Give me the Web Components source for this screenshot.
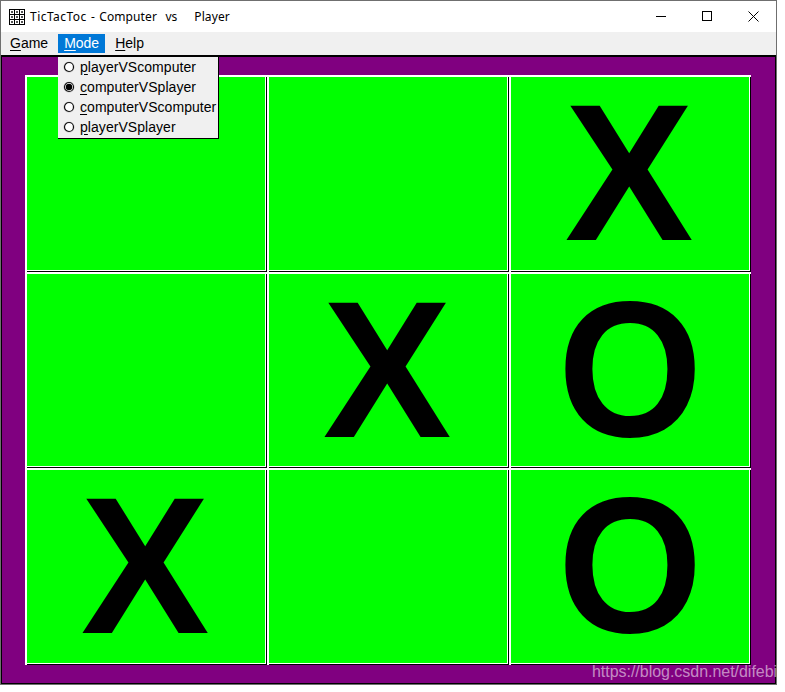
<!DOCTYPE html>
<html><head><meta charset="utf-8"><style>
html,body{margin:0;padding:0;background:#fff;width:785px;height:692px;overflow:hidden}
</style></head><body>
<ttt-window>
  <ttt-title slot="title"><span style="letter-spacing:.47px">TicTacToc</span> - Computer&nbsp; vs&nbsp;&nbsp;&nbsp;&nbsp;Player</ttt-title>
  <ttt-menubar slot="menu"></ttt-menubar>
  <ttt-board slot="board" marks=",,X,,X,O,X,,O"></ttt-board>
  <ttt-menu slot="popup"></ttt-menu>
</ttt-window>
<script>
function def(name,css,html,init){
  customElements.define(name,class extends HTMLElement{
    constructor(){super();this.attachShadow({mode:'open'}).innerHTML='<style>'+css+'</style>'+html;}
    connectedCallback(){if(init)init.call(this,this.shadowRoot);}
  });
}
const cellsIcon=[1,6,11].flatMap(y=>[1,6,11].map(x=>`<rect x="${x}" y="${y}" width="4" height="4" fill="#fff"/><rect x="${x+1}" y="${y+1}" width="2" height="2" fill="#555"/>`)).join('');
def('ttt-window',`
 :host{display:block;position:relative;width:777px;height:685px;box-sizing:border-box;border:1px solid #6f6f6f;background:#fff;font-family:"Liberation Sans",Arial,sans-serif}
 .wrap{display:flex;flex-direction:column;height:100%}
 .foot{flex:1;display:flex;min-height:0}
 .pop{position:absolute;left:57px;top:54px}
 .wm{position:absolute;left:591px;bottom:3px;font:16px "Liberation Sans",Arial,sans-serif;letter-spacing:-.03px;color:rgba(255,255,255,.55);white-space:nowrap}
`,`<div class="wrap"><slot name="title"></slot><slot name="menu"></slot><div class="foot"><slot name="board"></slot></div></div>
<div class="pop"><slot name="popup"></slot></div><div class="wm">https://blog.csdn.net/difebi</div>`);
def('ttt-title',`
 :host{display:flex;align-items:center;height:31px;flex:none;background:#fff;font:12px "Noto Sans","Segoe UI",sans-serif;color:#000}
 .ic{margin:0 5px 0 8px;flex:none;display:block}
 .t{flex:1;white-space:pre;letter-spacing:.1px;word-spacing:1px}
 .b{width:46px;height:31px;display:flex;align-items:center;justify-content:center;flex:none}
 .btns{display:flex}
`,`<svg class="ic" width="16" height="16" viewBox="0 0 16 16" shape-rendering="crispEdges"><rect width="16" height="16" fill="#000"/>${cellsIcon}</svg>
<span class="t"><slot></slot></span>
<div class="btns"><div class="b"><svg width="11" height="11" shape-rendering="crispEdges"><rect x="0" y="5" width="10" height="1" fill="#000"/></svg></div>
<div class="b"><svg width="11" height="11" shape-rendering="crispEdges"><rect x=".5" y=".5" width="9" height="9" fill="none" stroke="#000"/></svg></div>
<div class="b"><svg width="11" height="11"><path d="M.5.5l10 10M10.5.5l-10 10" stroke="#000" stroke-width="1" fill="none"/></svg></div></div>`);
def('ttt-menubar',`
 :host{display:flex;height:23px;flex:none;background:#f0f0f0;font:14px "Liberation Sans",Arial,sans-serif;color:#000;padding:2px 0 0 3px;box-sizing:border-box;align-items:flex-start}
 span{padding:0 6px;margin-right:4px;height:19px;line-height:18px}
 span.a{background:#0078d7;color:#fff}
 u{text-underline-offset:2px}
`,`<span><u>G</u>ame</span><span class="a"><u>M</u>ode</span><span><u>H</u>elp</span>`);
def('ttt-menu',`
 :host{display:block;width:161px;box-sizing:border-box;background:#f0f0f0;border-top:2px solid #000;border-right:1px solid #000;border-bottom:1px solid #000;padding:0 0 1px;font:14px "Liberation Sans",Arial,sans-serif;letter-spacing:.05px;color:#000}
 div{display:flex;align-items:center;height:20px;white-space:nowrap}
 svg{margin:0 5px 0 5px;flex:none}
 u{text-underline-offset:2px}
`,[['p','layerVScomputer',0],['c','omputerVSplayer',1],['c','omputerVScomputer',0],['p','layerVSplayer',0]].map(([a,b,s])=>
`<div><svg width="12" height="12"><circle cx="6" cy="6" r="5.6" fill="#aaa" opacity=".5"/><circle cx="6" cy="6" r="4.5" fill="#fff" stroke="#111" stroke-width="1.2"/>${s?'<circle cx="6" cy="6" r="3.2" fill="#000"/>':''}</svg><span><u>${a}</u>${b}</span></div>`).join(''));
def('ttt-board',`
 :host{display:block;flex:1;background:#800080;border:solid #000;border-width:2px 1px 1px 1px;padding:18px 24px 18px 23px;box-sizing:border-box;min-width:0}
 .g{display:grid;grid-template-columns:repeat(3,242px);grid-template-rows:197px 196px 197px;height:100%}
`,`<div class="g"></div>`,function(r){
  const g=r.querySelector('.g');
  (this.getAttribute('marks')||'').split(',').forEach(m=>{const c=document.createElement('ttt-cell');c.setAttribute('mark',m);if(m)c.textContent=m;g.appendChild(c);});
});
def('ttt-cell',`
 :host{display:flex;align-items:center;justify-content:center;background:#0f0;box-sizing:border-box;border-style:solid;border-width:2px 0 0 2px;border-color:#fff;box-shadow:inset -1px -1px 0 #000,inset -2px -2px 0 #fff;padding:0 2px 3px 0;font:bold 193px/.9 "Liberation Sans",Arial,sans-serif;color:#000}
 span{display:block}
 :host([mark="X"]) span{transform:translateX(-1px) scale(1,1.01)}
 :host([mark="O"]) span{transform:scaleX(.965)}
`,`<span><slot></slot></span>`);
</script></body></html>
